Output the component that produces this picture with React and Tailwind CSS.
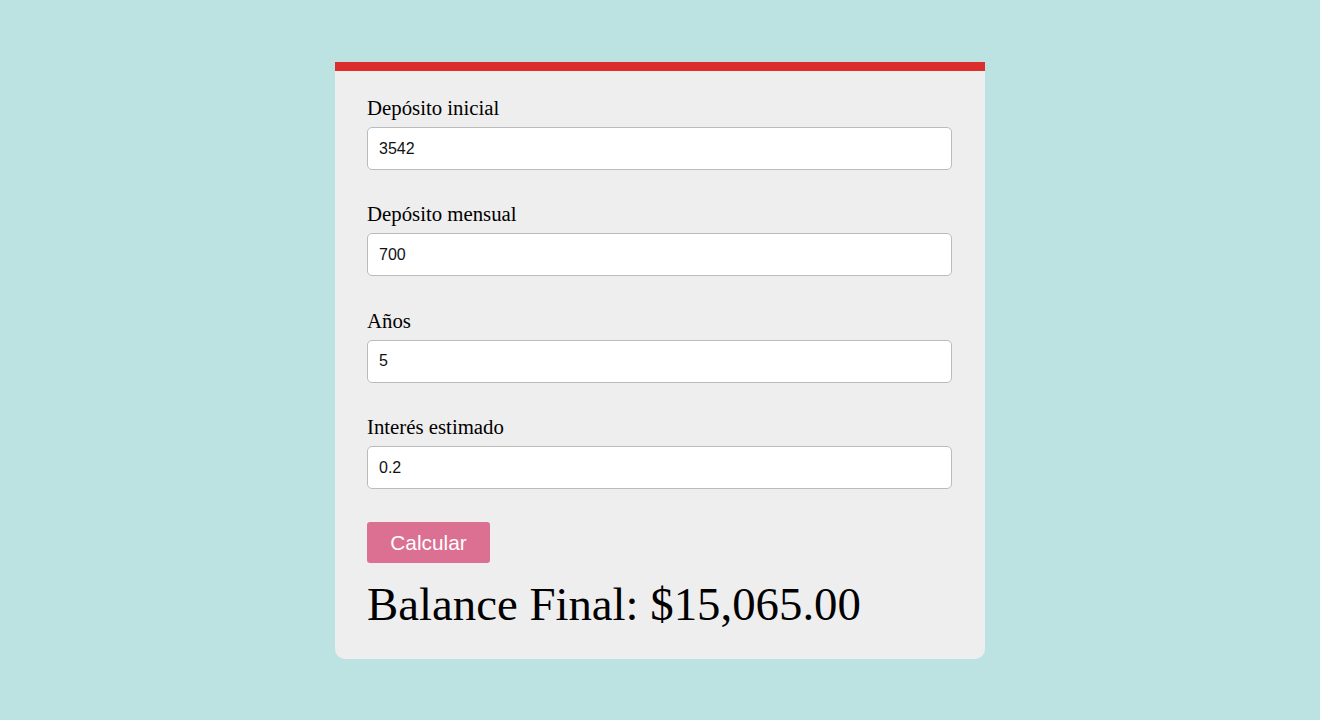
const fields = [
  { label: "Depósito inicial", value: "3542" },
  { label: "Depósito mensual", value: "700" },
  { label: "Años", value: "5" },
  { label: "Interés estimado", value: "0.2" },
];

export default function App() {
  return (
    <div className="min-h-[720px] bg-[#bce2e1] pt-[62px] font-['Liberation_Serif',serif] text-black">
      <div className="mx-auto w-[650px] rounded-b-[10px] border-t-[9px] border-[#dd2e2e] bg-[#eeeeee] px-8 pt-[21px] pb-[28px]">
        {fields.map((f) => (
          <div key={f.label} className="mb-[28.4px]">
            <label className="mb-[4px] block text-[20.8px] leading-[31px]">{f.label}</label>
            <input
              type="text"
              defaultValue={f.value}
              className="block h-[43px] w-[585px] rounded-[5px] border border-[#bbbbbb] bg-white px-[11px] font-['Liberation_Sans',sans-serif] text-[16px] text-[#111] outline-none"
            />
          </div>
        ))}
        <button className="mt-[4.6px] h-[41px] w-[123px] rounded-[3px] bg-[#db7093] font-['Liberation_Sans',sans-serif] text-[20.8px] text-white">
          Calcular
        </button>
        <h2 className="mt-[14px] text-[46.8px] leading-[normal]">Balance Final: $15,065.00</h2>
      </div>
    </div>
  );
}
